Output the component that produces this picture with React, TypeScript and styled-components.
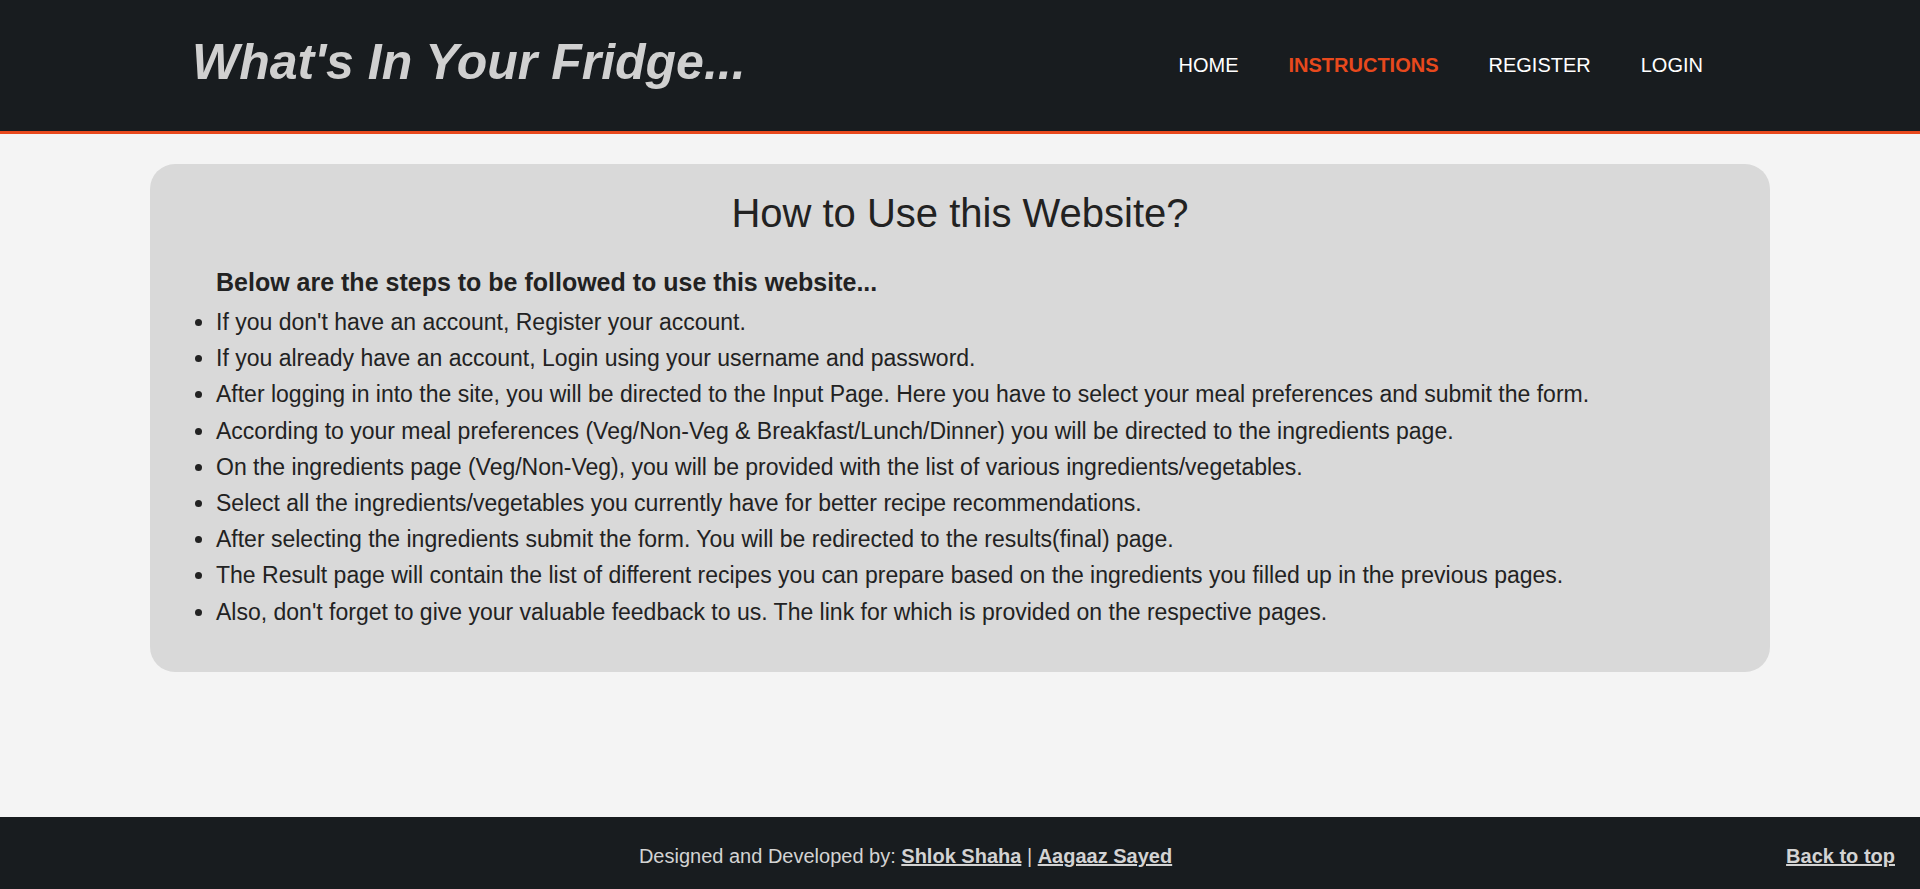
import React from 'react'
import styled, { createGlobalStyle } from 'styled-components'

const GlobalStyle = createGlobalStyle`
  html, body, #root {
    height: 100%;
  }
  body {
    margin: 0;
    background: #f4f4f4;
    color: #222;
    font-family: 'Liberation Sans', Arial, sans-serif;
  }
`

const Page = styled.div`
  display: flex;
  flex-direction: column;
  min-height: 100vh;
`

const Header = styled.header`
  height: 131px;
  padding: 0 10%;
  display: flex;
  align-items: center;
  justify-content: space-between;
  background: #181c1f;
  border-bottom: 3px solid #e8491d;
`

const Brand = styled.h1`
  margin: 0 0 7px;
  font-size: 50px;
  font-style: italic;
  font-weight: bold;
  color: #d0d0d0;
`

const Nav = styled.ul`
  display: flex;
  margin: 0;
  padding: 0;
  list-style: none;
`

const NavLink = styled.a<{ $active?: boolean }>`
  display: block;
  padding: 0 25px;
  font-size: 20px;
  text-transform: uppercase;
  text-decoration: none;
  color: ${({ $active }) => ($active ? '#e8491d' : '#ffffff')};
  font-weight: ${({ $active }) => ($active ? 'bold' : 'normal')};
`

const Main = styled.main`
  flex: 1;
  padding-top: 30px;
`

const Card = styled.section`
  margin: 0 150px;
  padding: 25.5px 26px 42px;
  background: #d9d9d9;
  border-radius: 25px;
`

const Title = styled.h2`
  margin: 0;
  font-size: 40px;
  line-height: 46px;
  font-weight: normal;
  text-align: center;
  color: #222;
`

const Lead = styled.h3`
  margin: 31.5px 0 7px;
  padding-left: 40px;
  font-size: 25px;
  line-height: 30px;
  font-weight: bold;
`

const Steps = styled.ul`
  margin: 0;
  padding-left: 40px;
`

const Step = styled.li`
  font-size: 23px;
  line-height: 36.2px;
`

const Footer = styled.footer`
  height: 72px;
  box-sizing: border-box;
  padding: 7px 25px 0;
  display: flex;
  align-items: center;
  background: #181c1f;
  color: #d3d3d3;
  font-size: 20px;
`

const Credits = styled.p`
  flex: 1;
  margin: 0;
  text-align: center;
`

const FooterLink = styled.a`
  color: #d3d3d3;
  font-weight: bold;
  text-decoration: underline;
`

const steps = [
  "If you don't have an account, Register your account.",
  'If you already have an account, Login using your username and password.',
  'After logging in into the site, you will be directed to the Input Page. Here you have to select your meal preferences and submit the form.',
  'According to your meal preferences (Veg/Non-Veg & Breakfast/Lunch/Dinner) you will be directed to the ingredients page.',
  'On the ingredients page (Veg/Non-Veg), you will be provided with the list of various ingredients/vegetables.',
  'Select all the ingredients/vegetables you currently have for better recipe recommendations.',
  'After selecting the ingredients submit the form. You will be redirected to the results(final) page.',
  'The Result page will contain the list of different recipes you can prepare based on the ingredients you filled up in the previous pages.',
  "Also, don't forget to give your valuable feedback to us. The link for which is provided on the respective pages.",
]

export default function App() {
  return (
    <Page>
      <GlobalStyle />
      <Header>
        <Brand>What's In Your Fridge...</Brand>
        <Nav>
          <li><NavLink href="#">Home</NavLink></li>
          <li><NavLink href="#" $active>Instructions</NavLink></li>
          <li><NavLink href="#">Register</NavLink></li>
          <li><NavLink href="#">Login</NavLink></li>
        </Nav>
      </Header>
      <Main>
        <Card>
          <Title>How to Use this Website?</Title>
          <Lead>Below are the steps to be followed to use this website...</Lead>
          <Steps>
            {steps.map((s) => (
              <Step key={s}>{s}</Step>
            ))}
          </Steps>
        </Card>
      </Main>
      <Footer>
        <Credits>
          Designed and Developed by: <FooterLink href="#">Shlok Shaha</FooterLink> | <FooterLink href="#">Aagaaz Sayed</FooterLink>
        </Credits>
        <FooterLink href="#">Back to top</FooterLink>
      </Footer>
    </Page>
  )
}
